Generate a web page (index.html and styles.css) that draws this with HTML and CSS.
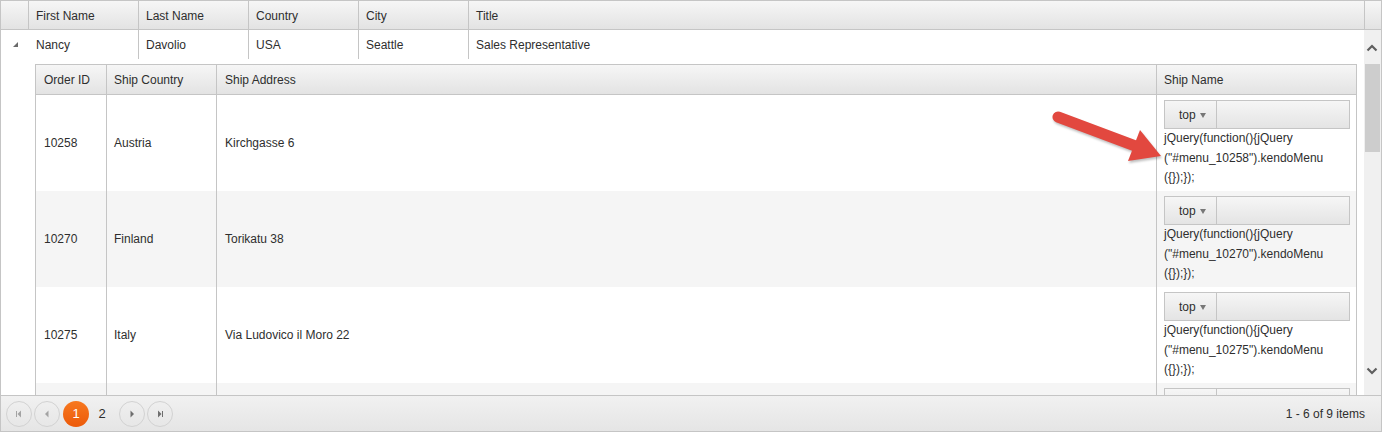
FILE: index.html
```html
<!DOCTYPE html>
<html>
<head>
<meta charset="utf-8">
<title>Grid</title>
<link rel="stylesheet" href="styles.css">
</head>
<body>
<div class="grid">
  <div class="grid-header">
    <div class="th hier"></div>
    <div class="th">First Name</div>
    <div class="th">Last Name</div>
    <div class="th">Country</div>
    <div class="th">City</div>
    <div class="th">Title</div>
    <div class="th sb-head"></div>
  </div>
  <div class="grid-body">
    <div class="content">
      <div class="master-row">
        <div class="td hier"><span class="collapse-icon"></span></div>
        <div class="td first">Nancy</div>
        <div class="td">Davolio</div>
        <div class="td">USA</div>
        <div class="td">Seattle</div>
        <div class="td">Sales Representative</div>
      </div>
      <div class="detail-row">
        <div class="hier"></div>
        <div class="detail-cell">
          <div class="dgrid">
            <div class="dhead">
              <div class="th first">Order ID</div>
              <div class="th">Ship Country</div>
              <div class="th wide">Ship Address</div>
              <div class="th">Ship Name</div>
            </div>
            <div class="drow">
              <div class="dtd first">10258</div>
              <div class="dtd">Austria</div>
              <div class="dtd wide">Kirchgasse 6</div>
              <div class="dtd ship">
                <div class="menu"><div class="menu-item">top<span class="caret"></span></div></div>
                <div class="code">jQuery(function(){jQuery<br>("#menu_10258").kendoMenu<br>({});});</div>
              </div>
            </div>
            <div class="drow alt">
              <div class="dtd first">10270</div>
              <div class="dtd">Finland</div>
              <div class="dtd wide">Torikatu 38</div>
              <div class="dtd ship">
                <div class="menu"><div class="menu-item">top<span class="caret"></span></div></div>
                <div class="code">jQuery(function(){jQuery<br>("#menu_10270").kendoMenu<br>({});});</div>
              </div>
            </div>
            <div class="drow">
              <div class="dtd first">10275</div>
              <div class="dtd">Italy</div>
              <div class="dtd wide">Via Ludovico il Moro 22</div>
              <div class="dtd ship">
                <div class="menu"><div class="menu-item">top<span class="caret"></span></div></div>
                <div class="code">jQuery(function(){jQuery<br>("#menu_10275").kendoMenu<br>({});});</div>
              </div>
            </div>
            <div class="drow alt">
              <div class="dtd first"></div>
              <div class="dtd"></div>
              <div class="dtd wide"></div>
              <div class="dtd ship">
                <div class="menu"><div class="menu-item"></div></div>
              </div>
            </div>
          </div>
        </div>
      </div>
    </div>
    <div class="vscroll">
      <svg class="chev chev-up" width="12" height="8" viewBox="0 0 12 8"><polyline points="1.5,6.5 6,2 10.5,6.5" fill="none" stroke="#5f5f5f" stroke-width="2.2"/></svg>
      <div class="thumb"></div>
      <svg class="chev chev-down" width="12" height="8" viewBox="0 0 12 8"><polyline points="1.5,1.5 6,6 10.5,1.5" fill="none" stroke="#5f5f5f" stroke-width="2.2"/></svg>
    </div>
  </div>
  <div class="pager">
    <span class="pbtn disabled"><svg width="10" height="10" viewBox="0 0 10 10"><rect x="2" y="2" width="1" height="6" fill="currentColor"/><polygon points="7,1.5 7,8.5 3.5,5" fill="currentColor"/></svg></span>
    <span class="pbtn disabled"><svg width="10" height="10" viewBox="0 0 10 10"><polygon points="6.5,1.5 6.5,8.5 3,5" fill="currentColor"/></svg></span>
    <span class="page current">1</span>
    <span class="page">2</span>
    <span class="pbtn next"><svg width="10" height="10" viewBox="0 0 10 10"><polygon points="3.5,1.5 3.5,8.5 7,5" fill="currentColor"/></svg></span>
    <span class="pbtn"><svg width="10" height="10" viewBox="0 0 10 10"><polygon points="3,1.5 3,8.5 6.5,5" fill="currentColor"/><rect x="7" y="2" width="1" height="6" fill="currentColor"/></svg></span>
    <span class="info">1 - 6 of 9 items</span>
  </div>
</div>
<svg class="callout" width="1382" height="432" viewBox="0 0 1382 432">
  <g class="arrow">
    <line x1="1058" y1="117" x2="1138" y2="147" stroke="#e2483f" stroke-width="11" stroke-linecap="round"/>
    <polygon points="1161,156 1128,161 1140,130" fill="#e2483f"/>
  </g>
</svg>
</body>
</html>
```

FILE: styles.css
```css
* { box-sizing: border-box; }

body {
  margin: 0;
  position: relative;
  font: 12px "Liberation Sans", Arial, sans-serif;
  color: #2e2e2e;
  background: #fff;
}

.grid {
  width: 1382px;
  height: 432px;
  border: 1px solid #c5c5c5;
  display: flex;
  flex-direction: column;
  overflow: hidden;
  background: #fff;
}

.grid-header {
  flex: none;
  display: grid;
  grid-template-columns: 27px 110px 110px 110px 110px 1fr 17px;
  height: 29px;
  border-bottom: 1px solid #c5c5c5;
  background: linear-gradient(#f6f6f6, #e3e3e3);
}

.th {
  border-left: 1px solid #c5c5c5;
  padding: 0 7px;
  line-height: 30px;
  white-space: nowrap;
  overflow: hidden;
}

.grid-header .hier { border-left: 0; }

.grid-body {
  flex: 1;
  display: flex;
  min-height: 0;
}

.content {
  flex: 1;
  overflow: hidden;
}

.master-row {
  display: grid;
  grid-template-columns: 27px 110px 110px 110px 110px 1fr;
  height: 29px;
}

.td {
  border-left: 1px solid #c5c5c5;
  padding: 1px 7px 0;
  line-height: 29px;
  white-space: nowrap;
  overflow: hidden;
}

.master-row .hier { border-left: 0; position: relative; }
.master-row .first { border-left-color: transparent; }

.collapse-icon {
  position: absolute;
  left: 12px;
  top: 12px;
  width: 0;
  height: 0;
  border-left: 5px solid transparent;
  border-bottom: 5px solid #6a6a6a;
}

.detail-row {
  display: grid;
  grid-template-columns: 27px 1fr;
}

.detail-cell {
  padding: 5px 7px 0;
}

.dgrid {
  border: 1px solid #c5c5c5;
  border-bottom: 0;
}

.dhead {
  display: grid;
  grid-template-columns: 70px 110px 1fr 200px;
  height: 30px;
  border-bottom: 1px solid #c5c5c5;
  background: linear-gradient(#f6f6f6, #e3e3e3);
}

.dhead .th { line-height: 29px; padding-top: 1px; }
.dhead .first { border-left: 0; }

.drow {
  display: grid;
  grid-template-columns: 70px 110px 1fr 200px;
  height: 96px;
  overflow: hidden;
}

.drow.alt { background: #f5f5f5; }

.dtd {
  border-left: 1px solid #c5c5c5;
  padding: 0 7px;
  display: flex;
  align-items: center;
  white-space: nowrap;
}

.drow .first { border-left: 0; }

.dgrid .first,
.dgrid .wide { padding-left: 8px; }

.dtd.ship {
  display: block;
  padding: 5px 6px 0 7px;
}

.menu {
  display: flex;
  height: 29px;
  border: 1px solid #c5c5c5;
  background: linear-gradient(#f6f6f6, #e4e4e4);
}

.menu-item {
  width: 52px;
  display: flex;
  align-items: center;
  padding: 1px 0 0 14px;
  border-right: 1px solid #c5c5c5;
}

.caret {
  margin-left: 4px;
  margin-top: 1px;
  width: 0;
  height: 0;
  border-left: 3px solid transparent;
  border-right: 3px solid transparent;
  border-top: 5px solid #777;
}

.code {
  line-height: 19.5px;
  white-space: nowrap;
}

.vscroll {
  flex: none;
  width: 17px;
  background: #f0f0f0;
  position: relative;
}

.chev {
  position: absolute;
  left: 2px;
}

.chev-up { top: 14px; }
.chev-down { top: 337px; }

.thumb {
  position: absolute;
  left: 1px;
  top: 34px;
  width: 15px;
  height: 88px;
  background: #cdcdcd;
}

.pager {
  flex: none;
  height: 36px;
  border-top: 1px solid #c5c5c5;
  background: linear-gradient(#f1f1f1, #e5e5e5);
  display: flex;
  align-items: center;
  padding: 0 16px 0 5px;
}

.pbtn {
  width: 26px;
  height: 26px;
  border-radius: 50%;
  border: 1px solid #d2d2d2;
  display: flex;
  align-items: center;
  justify-content: center;
  color: #6e6e6e;
  margin-right: 2px;
}

.pbtn.disabled { color: #a3a3a3; }
.pbtn.next { margin-left: 4px; }

.page {
  width: 26px;
  height: 26px;
  border-radius: 50%;
  display: flex;
  align-items: center;
  justify-content: center;
  font-size: 13px;
}

.page.current {
  margin-left: 1px;
  color: #fff;
  background: linear-gradient(#f7781f, #ec5a0a);
}

.info {
  margin-left: auto;
}

.callout {
  position: absolute;
  left: 0;
  top: 0;
  pointer-events: none;
}

.arrow {
  filter: drop-shadow(1px 2px 1px rgba(0, 0, 0, 0.25));
}
```
